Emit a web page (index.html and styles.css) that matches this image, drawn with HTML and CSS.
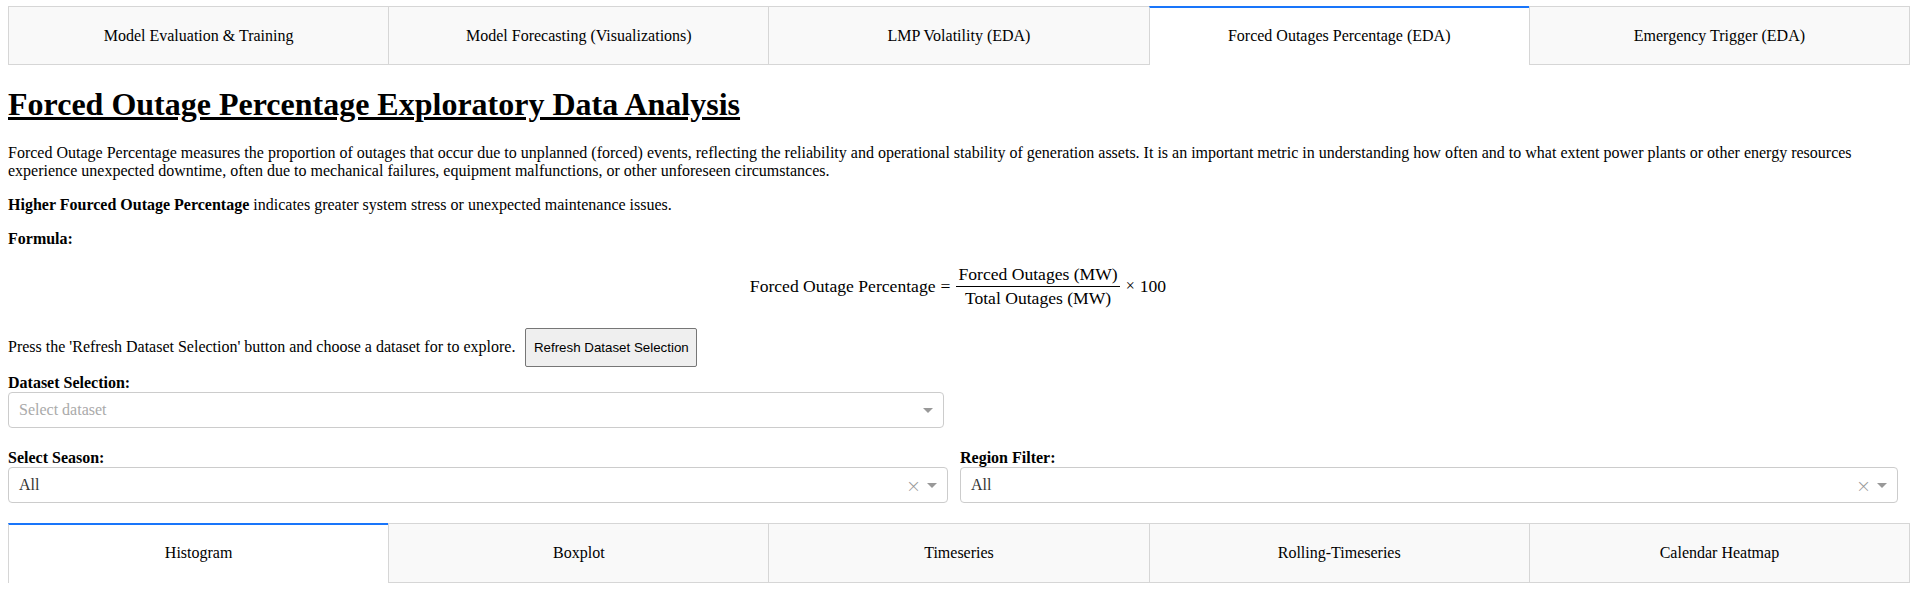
FILE: index.html
```html
<!DOCTYPE html>
<html>
<head>
<meta charset="utf-8">
<link rel="stylesheet" href="styles.css">
</head>
<body>
<div class="app">
  <div class="tabs">
    <div class="tab">Model Evaluation &amp; Training</div>
    <div class="tab">Model Forecasting (Visualizations)</div>
    <div class="tab">LMP Volatility (EDA)</div>
    <div class="tab selected">Forced Outages Percentage (EDA)</div>
    <div class="tab">Emergency Trigger (EDA)</div>
  </div>

  <h1 class="title">Forced Outage Percentage Exploratory Data Analysis</h1>

  <p class="para">Forced Outage Percentage measures the proportion of outages that occur due to unplanned (forced) events, reflecting the reliability and operational stability of generation assets. It is an important metric in understanding how often and to what extent power plants or other energy resources experience unexpected downtime, often due to mechanical failures, equipment malfunctions, or other unforeseen circumstances.</p>
  <p class="para"><strong>Higher Fourced Outage Percentage</strong> indicates greater system stress or unexpected maintenance issues.</p>
  <p class="para"><strong>Formula:</strong></p>

  <div class="math">
    <span class="mrow">
      <span class="mtext">Forced Outage Percentage</span>
      <span class="mop">=</span>
      <span class="frac">
        <span class="num">Forced Outages (MW)</span>
        <span class="den">Total Outages (MW)</span>
      </span>
      <span class="mop times">×</span>
      <span class="mtext">100</span>
    </span>
  </div>

  <div class="refresh-row">
    <span>Press the 'Refresh Dataset Selection' button and choose a dataset for to explore.</span>
    <button class="btn">Refresh Dataset Selection</button>
  </div>

  <div class="field dataset">
    <label class="lbl">Dataset Selection:</label>
    <div class="select">
      <span class="placeholder">Select dataset</span>
      <span class="arrow-zone"><span class="arrow"></span></span>
    </div>
  </div>

  <div class="filters">
    <div class="field">
      <label class="lbl">Select Season:</label>
      <div class="select">
        <span class="value">All</span>
        <span class="clear">×</span>
        <span class="arrow-zone"><span class="arrow"></span></span>
      </div>
    </div>
    <div class="field">
      <label class="lbl">Region Filter:</label>
      <div class="select">
        <span class="value">All</span>
        <span class="clear">×</span>
        <span class="arrow-zone"><span class="arrow"></span></span>
      </div>
    </div>
  </div>

  <div class="tabs sub">
    <div class="tab selected">Histogram</div>
    <div class="tab">Boxplot</div>
    <div class="tab">Timeseries</div>
    <div class="tab">Rolling-Timeseries</div>
    <div class="tab">Calendar Heatmap</div>
  </div>
</div>
</body>
</html>
```

FILE: styles.css
```css
html, body {
  margin: 0;
  padding: 0;
  background: #ffffff;
}

body {
  font-family: "Liberation Serif", "Times New Roman", serif;
  font-size: 16px;
  color: #000;
}

.app {
  padding: 6px 8px 0 8px;
}

.tabs {
  display: flex;
  margin-right: -4px;
}

.tab {
  flex: 1 1 0;
  box-sizing: border-box;
  background: #f9f9f9;
  border: 1px solid #d6d6d6;
  border-right: none;
  padding: 20px 25px;
  line-height: 17px;
  text-align: center;
  color: #000;
}

.tab:last-child {
  border-right: 1px solid #d6d6d6;
}

.tab.selected {
  background: #ffffff;
  border-top: 2px solid #1975fa;
  border-bottom: none;
  padding-top: 19px;
}

.sub .tab {
  padding-bottom: 21px;
}

.title {
  font-size: 32px;
  font-weight: bold;
  text-decoration: underline;
  margin: 21px 0 21px 0;
}

.para {
  margin: 16px 0;
  line-height: 18px;
}

.math {
  text-align: center;
  margin: 13px 0 20px 0;
  font-size: 17.6px;
}

.mrow {
  display: inline-flex;
  align-items: center;
  margin-left: 2px;
}

.mop {
  padding: 0 5px;
}

.times {
  padding: 0 5px 0 5px;
  font-size: 16px;
}

.frac {
  display: inline-flex;
  flex-direction: column;
  align-items: center;
  padding: 0 1px;
}

.num {
  line-height: 20px;
  padding: 0 2px 2px 2px;
  border-bottom: 1px solid #000;
}

.den {
  line-height: 20px;
  padding: 1px 2px 0 2px;
}

.refresh-row {
  line-height: 18px;
  margin-bottom: 7px;
}

.btn {
  font-family: "Liberation Sans", Arial, sans-serif;
  font-size: 13.333px;
  color: #000;
  background: #efefef;
  border: 1px solid #767676;
  border-radius: 2px;
  padding: 11px 7.5px;
  margin-left: 6px;
}

.field {
  display: flex;
  flex-direction: column;
}

.dataset {
  width: 936px;
  margin-bottom: 21px;
}

.lbl {
  font-weight: bold;
  line-height: 18px;
}

.select {
  box-sizing: border-box;
  height: 36px;
  border: 1px solid #cccccc;
  border-radius: 4px;
  background: #ffffff;
  display: flex;
  align-items: center;
  padding-left: 10px;
}

.placeholder {
  flex: 1;
  color: #aaaaaa;
}

.value {
  flex: 1;
  color: #333333;
}

.clear {
  color: #999999;
  font-size: 18px;
  width: 17px;
  text-align: center;
  font-family: "DejaVu Sans", sans-serif;
  font-weight: 300;
}

.arrow-zone {
  width: 25px;
  padding-right: 5px;
  box-sizing: border-box;
  display: flex;
  justify-content: center;
}

.arrow {
  width: 0;
  height: 0;
  border-style: solid;
  border-color: #999999 transparent transparent;
  border-width: 5px 5px 2.5px;
  margin-top: 3px;
}

.filters {
  display: grid;
  grid-template-columns: 940px 938px;
  column-gap: 12px;
}

.sub {
  margin-top: 20px;
}
```
